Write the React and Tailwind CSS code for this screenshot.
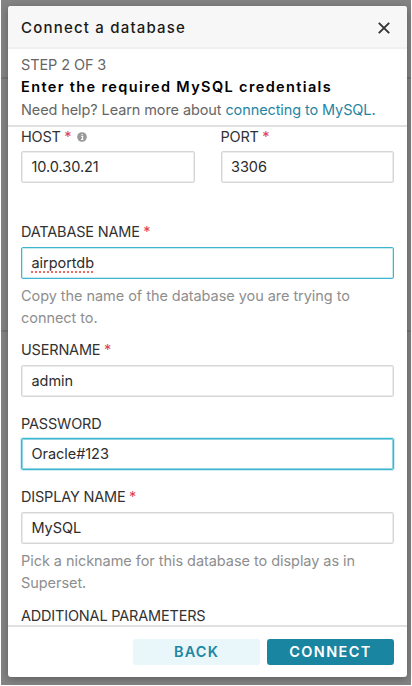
function Required() {
  return <span className="ml-[3.5px] text-[#e04355]">*</span>;
}

function Label({ children, required, info }) {
  return (
    <div className="flex h-[22px] items-center text-[14.5px] whitespace-nowrap text-[#323232]">
      <span className="tracking-[-0.19px]">{children}</span>
      {required && <Required />}
      {info && (
        <svg className="ml-[5.5px] size-[10px]" viewBox="0 0 10 10">
          <circle cx="5" cy="5" r="4.8" fill="#999" />
          <path d="M4 4.3h1.6v3M3.9 7.4h2.4M4.6 2.5h1.1" stroke="#fff" strokeWidth="1.1" fill="none" />
        </svg>
      )}
    </div>
  );
}

const boxStyles = {
  normal: "border-[#d6d6d6] shadow-[inset_0_0_0_1px_#ececec]",
  active: "border-[#3fb6cf] shadow-[inset_0_0_0_1px_#c9ebf2]",
  focused: "border-[#3fb6cf] shadow-[inset_0_0_0_1px_#8fd4e2,0_0_0_1px_#d2eef5]",
};

function Box({ children, state = "normal" }) {
  return (
    <div className={"flex h-8 items-center rounded-[2px] border bg-white pl-[9.5px] text-[14.5px] tracking-[-0.05px] text-[#2c2c2c] " + boxStyles[state]}>
      {children}
    </div>
  );
}

function Help({ children }) {
  return <p className="text-[14.5px] leading-[22px] tracking-[-0.05px] whitespace-nowrap text-[#8e8e8e]">{children}</p>;
}

export default function App() {
  return (
    <div className="h-[686px] w-[412px] overflow-hidden bg-white pr-px pb-px pl-px font-['Inter',sans-serif]">
      <div className="h-[685px] bg-[linear-gradient(#757575,#757575),linear-gradient(#757575,#757575)] bg-[#848484] bg-[length:100%_2px] bg-[position:0_77px,0_330px] bg-no-repeat px-[7px] pt-[6px]">
        <div className="flex h-[671px] w-[399px] flex-col rounded-[3px] bg-white shadow-[0_2px_8px_rgba(0,0,0,0.3)]">
          <header className="flex h-[43px] shrink-0 items-center justify-between rounded-t-[3px] border-b-2 border-[#f0f0f0] bg-[#f7f7f7] pr-[17px] pl-[13px]">
            <h1 className="pt-[3px] text-[15px] font-medium tracking-[1.2px] whitespace-nowrap text-[#1a1a1a]">Connect a database</h1>
            <svg className="mt-[3px] size-3" viewBox="0 0 12 12">
              <path d="M.8 .8l10.4 10.4M11.2 .8L.8 11.2" stroke="#333" strokeWidth="1.9" fill="none" />
            </svg>
          </header>

          <section className="h-[78px] shrink-0 border-b-2 border-[#e0e0e0] pt-[5px] pl-[13px] text-[14.5px] whitespace-nowrap text-[#666]">
            <p className="h-[22px] leading-[22px] tracking-[-0.1px]">STEP 2 OF 3</p>
            <h2 className="h-[23px] text-[14.5px] leading-[22px] font-semibold tracking-[1.37px] text-black">Enter the required MySQL credentials</h2>
            <p className="h-[22px] leading-[22px] tracking-[-0.1px]">
              Need help? Learn more about <span className="text-[#1f86a3]">connecting to MySQL.</span>
            </p>
          </section>

          <main className="h-[498px] shrink-0 overflow-hidden px-[13px] pt-px">
            <div className="mt-[-2px] flex gap-[26px]">
              <div className="w-[173.5px]">
                <Label required info>HOST</Label>
                <div className="mt-[3px]"><Box>10.0.30.21</Box></div>
              </div>
              <div className="w-[173.5px]">
                <Label required>PORT</Label>
                <div className="mt-[3px]"><Box>3306</Box></div>
              </div>
            </div>

            <div className="mt-[38px]">
              <Label required>DATABASE NAME</Label>
              <div className="mt-[4px]">
                <Box state="active">
                  <span className="underline decoration-[#ee6a62] decoration-dotted decoration-[1.5px] underline-offset-[3px] [text-decoration-skip-ink:none]">airportdb</span>
                </Box>
              </div>
              <div className="mt-[6px]">
                <Help>Copy the name of the database you are trying to<br />connect to.</Help>
              </div>
            </div>

            <div className="mt-[10px]">
              <Label required>USERNAME</Label>
              <div className="mt-[4px]"><Box>admin</Box></div>
            </div>

            <div className="mt-[16px]">
              <Label>PASSWORD</Label>
              <div className="mt-[3px]"><Box state="focused">Oracle#123</Box></div>
            </div>

            <div className="mt-[16px]">
              <Label required>DISPLAY NAME</Label>
              <div className="mt-[4px]"><Box>MySQL</Box></div>
              <div className="mt-[6px]">
                <Help>Pick a nickname for this database to display as in<br />Superset.</Help>
              </div>
            </div>

            <div className="mt-[11px]"><Label>ADDITIONAL PARAMETERS</Label></div>
          </main>

          <footer className="flex grow items-start justify-end gap-[7px] border-t-2 border-[#e0e0e0] pt-[12px] pr-[13px] text-[14.5px] font-semibold">
            <button className="h-[26px] w-[127px] rounded-[3px] bg-[#e9f6fa] tracking-[1.2px] text-[#1f86a3]">BACK</button>
            <button className="h-[26px] w-[127px] rounded-[3px] bg-[#1a85a0] tracking-[1.4px] text-white">CONNECT</button>
          </footer>
        </div>
      </div>
    </div>
  );
}
